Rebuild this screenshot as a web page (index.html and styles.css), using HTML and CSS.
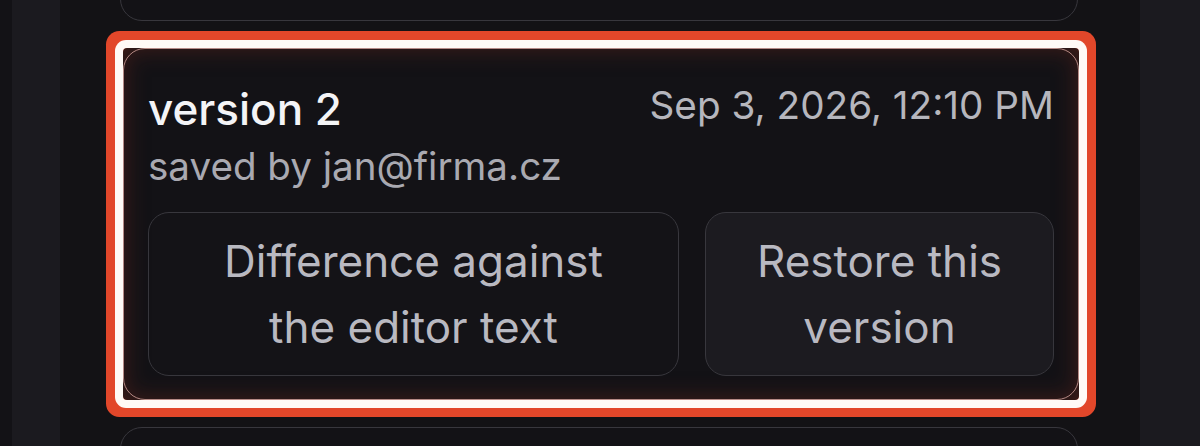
FILE: index.html
```html
<!DOCTYPE html>
<html lang="en">
<head>
<meta charset="utf-8">
<title>Versions</title>
<link rel="stylesheet" href="styles.css">
</head>
<body>
<div class="app">
  <div class="rail"></div>
  <div class="sidebar"></div>
  <main class="main">
    <div class="list">
      <div class="card card-prev"></div>
      <div class="card card-selected">
        <div class="card-head">
          <div class="title">version 2</div>
          <div class="date">Sep 3, 2026, 12:10 PM</div>
        </div>
        <div class="author">saved by jan@firma.cz</div>
        <div class="actions">
          <button class="btn btn-diff">Difference against the editor text</button>
          <button class="btn btn-restore">Restore this version</button>
        </div>
      </div>
      <div class="card card-next"></div>
    </div>
  </main>
  <div class="panel"></div>
</div>
</body>
</html>
```

FILE: styles.css
```css
* { box-sizing: border-box; }
html, body { margin: 0; padding: 0; height: 100%; }
body {
  background: #131216;
  font-family: Inter, "Noto Sans", sans-serif;
  overflow: hidden;
}
.app {
  display: flex;
  height: 446px;
  overflow: hidden;
}
.rail { width: 12px; background: #131216; }
.sidebar { width: 48px; background: #1b1a1f; }
.main { flex: 1; background: #131215; }
.panel { width: 60px; background: #1b1a1f; }

.list {
  display: flex;
  flex-direction: column;
  gap: 27px;
  padding: 0 62px 0 60px;
  margin-top: -80px;
}
.card {
  border: 1px solid #38373d;
  border-radius: 22px;
  background: #131216;
}
.card-prev { height: 101px; }
.card-next { height: 120px; }

.card-selected {
  position: relative;
  margin-left: 3px;
  margin-right: -1px;
  padding: 23px 24px 23px 24px;
  border-color: #c9a9a6;
}
.card-selected::after {
  content: "";
  position: absolute;
  inset: -1px;
  border-radius: 4px;
  pointer-events: none;
  box-shadow:
    inset 0 0 24px rgba(120, 42, 30, 0.5),
    0 0 0 8px #fffaf6,
    0 0 0 17px #e2472a;
}
.card-head {
  display: flex;
  justify-content: space-between;
  align-items: flex-start;
}
.title {
  color: #f4f4f6;
  font-size: 44px;
  font-weight: 500;
  line-height: 58px;
  margin-top: 8px;
}
.date {
  color: #b6b6bd;
  font-size: 38.7px;
  line-height: 58px;
  margin-top: 4px;
}
.author {
  color: #a9a9b1;
  font-size: 38.6px;
  line-height: 57px;
}
.actions {
  display: grid;
  grid-template-columns: minmax(0, 531fr) minmax(0, 349fr);
  gap: 26px;
  margin-top: 17px;
}
.btn {
  font-family: inherit;
  font-size: 44px;
  line-height: 66px;
  color: #b9b9c1;
  border: 1px solid #38373d;
  border-radius: 21px;
  padding: 15px 45px;
  text-align: center;
}
.btn-diff { background: #141317; }
.btn-restore { background: #1c1b20; }
```
